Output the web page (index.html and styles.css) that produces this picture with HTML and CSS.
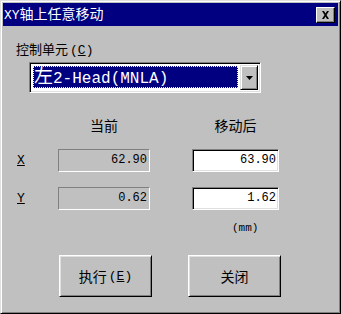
FILE: index.html
```html
<!DOCTYPE html>
<html lang="zh-CN">

<head>
    <meta charset="UTF-8">
    <title>XY轴上任意移动</title>
    <link rel="stylesheet" href="styles.css">
</head>

<body>
    <div class="window">
        <div class="titlebar">
            <span class="title"><span class="latin">XY</span>轴上任意移动</span>
            <div class="close">
                <svg width="9" height="8" viewBox="0 0 9 8">
                    <path d="M1 0h2l1.5 2.5L6 0h2L5.5 4 8 8H6L4.5 5.5 3 8H1l2.5-4z" fill="#000"/>
                </svg>
            </div>
        </div>

        <div class="client">
            <div class="group-label">控制单元<span class="acc">(<u>C</u>)</span></div>

            <div class="combo">
                <div class="combo-field">
                    <span class="combo-value"><span class="cjk-big">左</span>2-Head(MNLA)</span>
                </div>
                <div class="combo-btn">
                    <svg width="7" height="4" viewBox="0 0 7 4"><path d="M0 0h7L3.5 4z" fill="#000"/></svg>
                </div>
            </div>

            <div class="coords">
                <span></span>
                <span class="head">当前</span>
                <span class="head">移动后</span>

                <span class="axis"><u>X</u></span>
                <div class="field static">62.90</div>
                <div class="field edit">63.90</div>

                <span class="axis"><u>Y</u></span>
                <div class="field static">0.62</div>
                <div class="field edit">1.62</div>
            </div>

            <div class="unit">(mm)</div>

            <div class="buttons">
                <div class="btn">执行<span class="acc">(<u>E</u>)</span></div>
                <div class="btn">关闭</div>
            </div>
        </div>
    </div>
</body>

</html>
```

FILE: styles.css
```css
body {
    margin: 0;
    font-family: "Noto Sans CJK SC", sans-serif;
}

.window {
    width: 341px;
    height: 314px;
    box-sizing: border-box;
    background-color: #c0c0c0;
    border: 1px solid;
    border-color: #dfdfdf #000 #000 #dfdfdf;
    box-shadow: inset 1px 1px #fff, inset -1px -1px #808080;
    padding: 2px;
}

.titlebar {
    height: 23px;
    background-color: #000080;
    color: white;
    display: flex;
    align-items: center;
    justify-content: space-between;
    padding: 0 3px 0 1px;
}

.title {
    font-size: 14px;
    line-height: 23px;
}

.latin {
    font-family: "Liberation Mono", monospace;
    font-size: 13px;
}

.close {
    width: 19px;
    height: 16px;
    box-sizing: border-box;
    background-color: #c0c0c0;
    border: 1px solid;
    border-color: #fff #000 #000 #fff;
    box-shadow: inset -1px -1px #808080;
    display: flex;
    align-items: center;
    justify-content: center;
}

.client {
    padding: 14px 0 0 13px;
}

.group-label {
    font-size: 13px;
    line-height: 17px;
}

.acc {
    font-family: "Liberation Mono", monospace;
    font-size: 13px;
    margin-left: 2px;
}

.combo {
    margin: 3px 0 0 13px;
    width: 232px;
    height: 31px;
    box-sizing: border-box;
    background-color: white;
    border: 1px solid;
    border-color: #808080 #fff #fff #808080;
    box-shadow: inset 1px 1px #000, inset -1px -1px #dfdfdf;
    padding: 2px;
    display: flex;
}

.combo-field {
    flex: 1;
    margin: 1px 2px 2px 1px;
    background-color: #000080;
    outline: 1px dotted #ffff80;
    outline-offset: -1px;
    color: white;
    display: flex;
    align-items: center;
    padding-left: 1px;
}

.combo-value {
    font-family: "Liberation Mono", monospace;
    font-size: 16px;
    line-height: 24px;
}

.cjk-big {
    font-family: "Noto Sans CJK SC", sans-serif;
    font-size: 19px;
}

.combo-btn {
    width: 18px;
    box-sizing: border-box;
    background-color: #c0c0c0;
    border: 1px solid;
    border-color: #dfdfdf #000 #000 #dfdfdf;
    box-shadow: inset 1px 1px #fff, inset -1px -1px #808080;
    display: flex;
    align-items: center;
    justify-content: center;
}

.coords {
    margin-top: 24px;
    display: grid;
    grid-template-columns: 42px 134px 87px;
    grid-template-rows: 17px 23px 23px;
    row-gap: 15px;
}

.coords .head:nth-child(2),
.static {
    width: 92px;
}

.head {
    font-size: 14px;
    line-height: 17px;
    text-align: center;
    margin-bottom: -3px;
}

.axis {
    font-family: "Liberation Mono", monospace;
    font-size: 13px;
    line-height: 23px;
    padding-left: 1px;
}

.field {
    box-sizing: border-box;
    height: 23px;
    font-family: "Liberation Mono", monospace;
    font-size: 12px;
    line-height: 21px;
    text-align: right;
    padding-right: 2px;
    border: 1px solid;
    border-color: #808080 #fff #fff #808080;
}

.static {
    background-color: #c0c0c0;
}

.edit {
    background-color: white;
    box-shadow: inset 1px 1px #000, inset -1px -1px #dfdfdf;
}

.unit {
    margin: 11px 0 0 216px;
    font-family: "Liberation Mono", monospace;
    font-size: 11px;
    line-height: 14px;
}

.buttons {
    display: flex;
    gap: 36px;
    margin: 20px 0 0 43px;
}

.btn {
    width: 93px;
    height: 42px;
    box-sizing: border-box;
    border: 1px solid;
    border-color: #fff #000 #000 #fff;
    box-shadow: inset 1px 1px #dfdfdf, inset -1px -1px #808080;
    font-size: 14px;
    display: flex;
    align-items: center;
    justify-content: center;
}
```
